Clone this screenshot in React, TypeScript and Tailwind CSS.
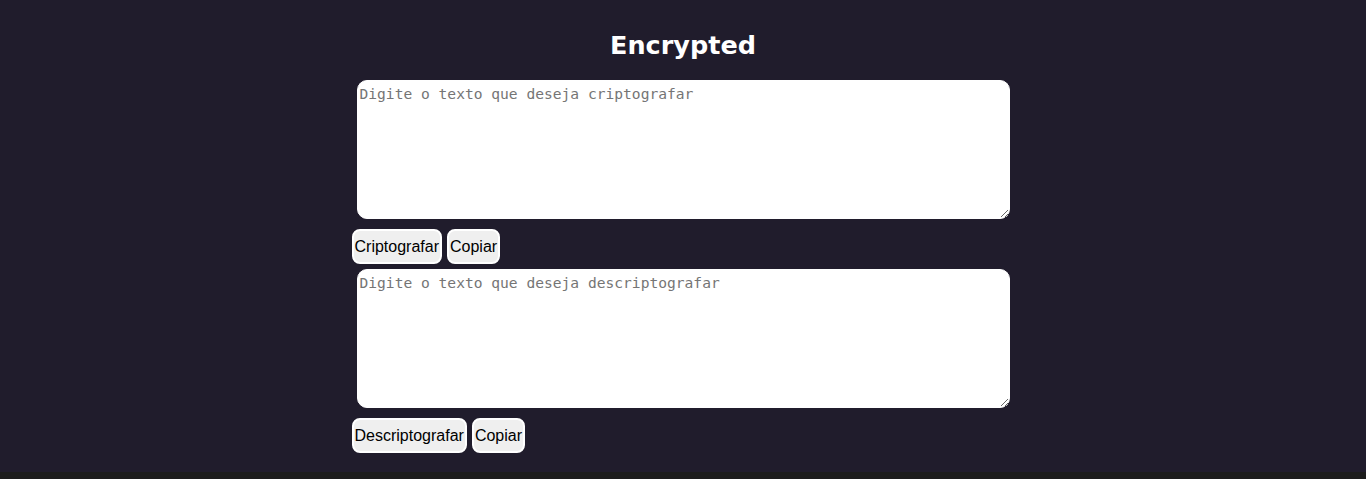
import React, { useState } from 'react';

const Button: React.FC<{ label: string; onClick?: () => void }> = ({ label, onClick }) => (
  <button
    onClick={onClick}
    className="h-[35px] px-[1px] bg-[#efefef] border-2 border-white rounded-[8px] text-black text-[16px] leading-[18px] font-['Liberation_Sans',Arial,sans-serif]"
  >
    {label}
  </button>
);

const App: React.FC = () => {
  const [plain, setPlain] = useState('');
  const [cipher, setCipher] = useState('');

  return (
    <div className="min-h-screen bg-[#1c1c1c]">
      <div className="h-[472px] bg-[#201c2c] flex flex-col items-center">
        <div className="w-[663px] flex flex-col">
          {/* Title */}
          <h1 className="mt-[27px] text-center text-white text-[25.5px] leading-[37px] font-bold font-['Comic_Sans_MS','DejaVu_Sans',sans-serif]">
            Encrypted
          </h1>

          <textarea
            value={plain}
            onChange={(e) => setPlain(e.target.value)}
            placeholder="Digite o texto que deseja criptografar"
            className="mt-[16px] ml-[5px] w-[653px] h-[139px] bg-white border border-white rounded-[10px] p-[2px] text-[14.6px] leading-[21px] font-['DejaVu_Sans_Mono',monospace] placeholder:text-[#757575] outline-none"
          />
          <div className="mt-[10px] flex gap-[5px]">
            <Button label="Criptografar" />
            <Button label="Copiar" />
          </div>

          <textarea
            value={cipher}
            onChange={(e) => setCipher(e.target.value)}
            placeholder="Digite o texto que deseja descriptografar"
            className="mt-[5px] ml-[5px] w-[653px] h-[139px] bg-white border border-white rounded-[10px] p-[2px] text-[14.6px] leading-[21px] font-['DejaVu_Sans_Mono',monospace] placeholder:text-[#757575] outline-none"
          />
          <div className="mt-[10px] flex gap-[5px]">
            <Button label="Descriptografar" />
            <Button label="Copiar" />
          </div>
        </div>
      </div>
    </div>
  );
};

export default App;
